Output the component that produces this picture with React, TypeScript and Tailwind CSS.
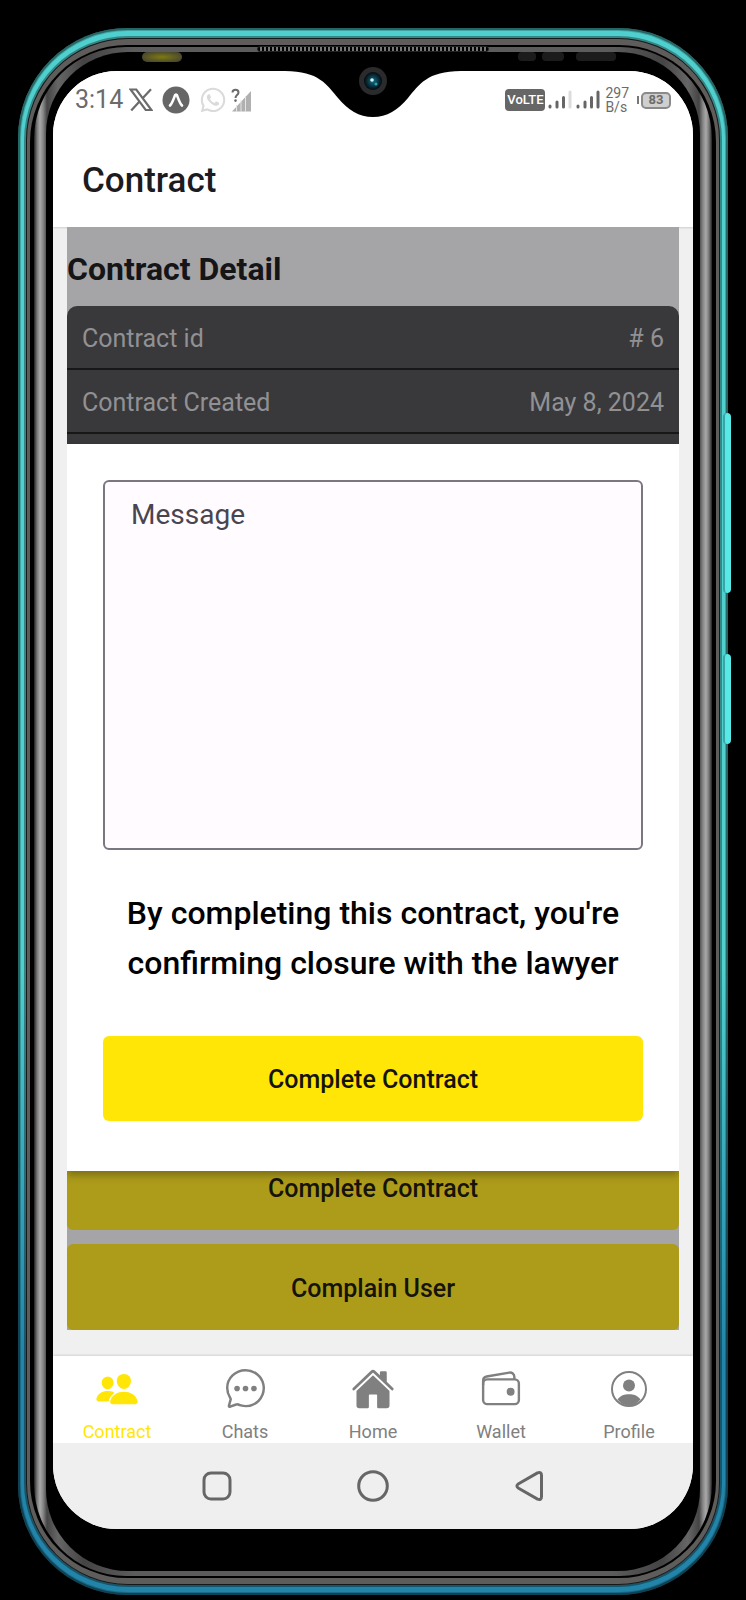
import React from "react";
import {
  IoChatbubbleEllipsesOutline,
  IoHome,
  IoPeople,
  IoWalletOutline,
} from "react-icons/io5";
import { FaWhatsapp } from "react-icons/fa";

function XLogo() {
  return (
    <svg viewBox="0 0 24 24" className="h-6 w-6" aria-hidden="true">
      <path
        d="M1.5 1.5h5.8L22.5 22h-5.8zM22 1.2l-8.6 9.3M9.8 14.2L2.2 22.6"
        fill="none"
        stroke="#6b6b6b"
        strokeWidth="2.2"
      />
    </svg>
  );
}

function ExpoLogo() {
  return (
    <svg viewBox="0 0 28 28" className="h-7 w-7" aria-hidden="true">
      <circle cx="14" cy="14" r="13.5" fill="#666" />
      <path
        d="M8 19.5C10.500 17 11.800 12.500 13 9.300c.4-1 1.600-1 2 0 1.200 3.200 2.500 7.700 5 10.200"
        fill="none"
        stroke="#fff"
        strokeWidth="2.600"
        strokeLinecap="round"
      />
    </svg>
  );
}

function UnknownSignal() {
  return (
    <svg viewBox="0 0 20 24" className="h-6 w-5" aria-hidden="true">
      <path d="M1 23.500L20 3v20.500z" fill="#b0b0b0" />
      <path d="M5.500 24V17M10 24V12M14.500 24V8" stroke="#e4e4e4" strokeWidth="1" />
      <path
        d="M1.500 4.500C1.500.8 7.500.8 7.500 4.500c0 2.600-3 2.600-3 5.500"
        fill="none"
        stroke="#fff"
        strokeWidth="4.500"
      />
      <path
        d="M1.500 4.500C1.500.8 7.500.8 7.500 4.500c0 2.600-3 2.600-3 5.500"
        fill="none"
        stroke="#6b6b6b"
        strokeWidth="2"
      />
      <circle cx="4.500" cy="12.600" r="1.300" fill="#6b6b6b" />
    </svg>
  );
}

function SignalBars({ full }: { full: boolean }) {
  return (
    <svg viewBox="0 0 24 20" className="h-5 w-6" aria-hidden="true">
      <g strokeWidth="3" strokeLinecap="round">
        <path d="M2 16v1M9 12v5M15.500 7.500V17" stroke="#666" />
        <path d="M22 2v15" stroke={full ? "#666" : "#dcdcdc"} />
      </g>
    </svg>
  );
}

function ProfileIcon() {
  return (
    <svg viewBox="0 0 40 40" className="h-10 w-10" aria-hidden="true">
      <circle cx="20" cy="20" r="17" fill="none" stroke="currentColor" strokeWidth="2" />
      <circle cx="20" cy="16.500" r="6" fill="currentColor" />
      <path d="M8.500 30.500c3-4 7-5.200 11.500-5.200s8.500 1.200 11.500 5.200A17 17 0 0 1 20 37 17 17 0 0 1 8.500 30.500z" fill="currentColor" />
    </svg>
  );
}

function StatusBar() {
  return (
    <div className="flex h-[58px] items-center justify-between pl-[22px] pr-[22px] text-[#6b6b6b]">
      <div className="flex items-center">
        <span className="text-[25px]">3:14</span>
        <span className="ml-1.5 flex items-center gap-[9px]">
          <XLogo />
          <ExpoLogo />
          <FaWhatsapp className="h-7 w-7 text-[#dadada]" />
        </span>
        <span className="ml-1 flex">
          <UnknownSignal />
        </span>
      </div>
      <div className="flex items-center">
        <span className="flex h-[22px] w-10 items-center justify-center rounded bg-[#666] text-[13px] font-medium text-white">
          VoLTE
        </span>
        <span className="ml-[3px] flex gap-1">
          <SignalBars full={false} />
          <SignalBars full />
        </span>
        <span className="ml-[5px] text-sm leading-[14px]">
          297
          <br />
          B/s
        </span>
        <span className="ml-2 flex items-center gap-0.5">
          <span className="h-2 w-0.5 bg-[#777]" />
          <span className="flex h-[17px] w-[30px] items-center justify-center rounded-[5px] border-2 border-[#8a8a8a] bg-[#cfcfcf] text-[13px] font-bold">
            83
          </span>
        </span>
      </div>
    </div>
  );
}

const rows = [
  { label: "Contract id", value: "# 6" },
  { label: "Contract Created", value: "May 8, 2024" },
];

function ContractPage() {
  return (
    <div className="col-start-1 row-start-1 flex flex-col bg-[#a5a5a7]">
      <h2 className="flex h-[79px] items-center pt-1 text-[32px] font-bold leading-none text-[#151517]">
        Contract Detail
      </h2>
      <dl className="flex-1 rounded-t-[10px] bg-[#39393b] text-[25px] text-[#919194]">
        {rows.map((row) => (
          <div
            key={row.label}
            className="flex h-16 items-center justify-between border-b-2 border-[#171718] px-[15px] pt-1"
          >
            <dt>{row.label}</dt>
            <dd>{row.value}</dd>
          </div>
        ))}
      </dl>
      <div className="flex flex-col gap-[14px] text-[25px] font-medium text-[#15130a]">
        <button className="h-[86px] rounded-md bg-[#ad9c1a] pt-1">Complete Contract</button>
        <button className="h-[86px] rounded-md bg-[#ad9c1a] pt-1">Complain User</button>
      </div>
    </div>
  );
}

function CompleteDialog() {
  return (
    <div
      role="dialog"
      aria-label="Complete Contract"
      className="z-10 col-start-1 row-start-1 mb-[159px] mt-[217px] flex flex-col bg-white px-9 pb-[50px] pt-9 shadow-[0_4px_8px_rgba(0,0,0,0.3)]"
    >
      <textarea
        aria-label="Message"
        placeholder="Message"
        className="h-[370px] resize-none rounded-md border-2 border-[#7b7780] bg-[#fffbff] px-[26px] py-[15px] text-[28px] leading-9 text-[#49454f] outline-none placeholder:text-[#49454f] placeholder:opacity-100"
      />
      <p className="mb-12 mt-[38px] text-center text-[32px] font-medium leading-[50px] text-black">
        By completing this contract, you're confirming closure with the lawyer
      </p>
      <button className="h-[85px] rounded-md bg-[#ffe606] pt-0.5 text-[25px] font-medium text-[#15130a]">
        Complete Contract
      </button>
    </div>
  );
}

const tabs = [
  { label: "Contract", icon: <IoPeople className="h-11 w-11" />, active: true },
  {
    label: "Chats",
    icon: <IoChatbubbleEllipsesOutline className="h-[45px] w-[45px] [&_path]:[stroke-width:28px]" />,
    active: false,
  },
  { label: "Home", icon: <IoHome className="h-11 w-11" />, active: false },
  {
    label: "Wallet",
    icon: <IoWalletOutline className="h-11 w-11 [&_path]:[stroke-width:28px] [&_rect]:[stroke-width:28px]" />,
    active: false,
  },
  { label: "Profile", icon: <ProfileIcon />, active: false },
];

function TabBar() {
  return (
    <nav className="grid h-[87px] grid-cols-5 bg-white shadow-[0_-1px_2px_rgba(0,0,0,0.12)]">
      {tabs.map((tab) => (
        <a
          key={tab.label}
          href="#"
          className={
            tab.active
              ? "flex flex-col items-center text-[#ffe606]"
              : "flex flex-col items-center text-[#808080]"
          }
        >
          <span className="flex h-[65px] items-center">{tab.icon}</span>
          <span className="text-lg leading-[22px]">{tab.label}</span>
        </a>
      ))}
    </nav>
  );
}

function SystemNav() {
  return (
    <div className="flex h-[86px] items-center justify-center gap-[124px] bg-[#efefef]">
      <button aria-label="Recent apps">
        <svg viewBox="0 0 32 32" className="h-8 w-8" fill="none" stroke="#666" strokeWidth="3">
          <rect x="3" y="3" width="26" height="26" rx="7" />
        </svg>
      </button>
      <button aria-label="Home screen">
        <svg viewBox="0 0 32 32" className="h-8 w-8" fill="none" stroke="#666" strokeWidth="3">
          <circle cx="16" cy="16" r="14.300" />
        </svg>
      </button>
      <button aria-label="Back">
        <svg viewBox="0 0 32 32" className="h-8 w-8" fill="none" stroke="#666" strokeWidth="3">
          <path d="M24.500 2.900L5.600 13.700q-3.400 2.300 0 4.600L24.500 29.100q4 1.400 4-2.600v-21q0-4-4-2.600z" />
        </svg>
      </button>
    </div>
  );
}

function Camera() {
  return (
    <svg viewBox="0 0 176 60" className="h-[60px] w-44" aria-hidden="true">
      <defs>
        <radialGradient id="lens">
          <stop offset="0" stopColor="#0f7186" />
          <stop offset="0.5" stopColor="#0a3c4c" />
          <stop offset="1" stopColor="#04090c" />
        </radialGradient>
      </defs>
      <path
        d="M0 0v14C34 14 42 28 53 41c10 12 21 19 35 19s25-7 35-19C134 28 142 14 176 14V0z"
        fill="#000"
      />
      <circle cx="88" cy="24" r="14" fill="#2b2b2d" />
      <circle cx="88" cy="24" r="9" fill="url(#lens)" />
      <circle cx="87" cy="23" r="1.800" fill="#d8f4f5" />
      <circle cx="91" cy="27" r="1.500" fill="#2fa3b6" />
    </svg>
  );
}

export default function App() {
  return (
    <div className="flex min-h-screen flex-col bg-black px-[18px] pb-[5px] pt-7 font-[Roboto,sans-serif]">
      <div className="relative flex flex-1 flex-col rounded-[110px] bg-linear-to-b from-[#4fcfce] from-60% to-[#2284a8] to-85% px-2 py-[10px] shadow-[inset_0_0_0_2px_rgba(0,0,0,0.38),inset_0_0_0_3px_rgba(0,0,0,0.2)]">
        <span className="absolute -right-[3px] top-[385px] h-[180px] w-2 rounded-sm border-l-2 border-[#3aa5a5] bg-[#58e8e6]" />
        <span className="absolute -right-[3px] top-[626px] h-[90px] w-2 rounded-sm border-l-2 border-[#3aa5a5] bg-[#58e8e6]" />
        <div className="flex flex-1 flex-col rounded-[102px] bg-[#5f5d5b] px-1 py-[7px] shadow-[0_0_0_2px_rgba(0,0,0,0.35),inset_0_0_0_1px_#161a1a]">
          <div className="flex flex-1 flex-col rounded-[97px] bg-black px-1 py-0.5">
            <div className="flex flex-1 flex-col rounded-[92px] bg-[linear-gradient(to_right,#222_0,#777_3px,#a9a9a9_6px,#888_9px,#444_13px,#666_24px,#444_50px,#5c5c5c_100px,#5c5c5c_calc(100%-100px),#444_calc(100%-50px),#666_calc(100%-24px),#444_calc(100%-13px),#888_calc(100%-9px),#a9a9a9_calc(100%-6px),#777_calc(100%-3px),#222_100%)] px-3 py-[5px]">
              <div className="relative flex flex-1 flex-col rounded-[82px] bg-black px-[7px] pb-[42px] pt-[19px]">
                <span className="absolute left-1/2 top-0 h-1.5 w-[232px] -translate-x-1/2 -translate-y-1.5 rounded-full border border-[#222] bg-[repeating-linear-gradient(to_right,#000_0,#000_2px,#777_2px,#777_4px)]" />
                <span className="absolute left-24 top-0 h-[10px] w-10 rounded-full bg-[radial-gradient(ellipse,#7d7a12,#3c3a35)]" />
                <span className="absolute right-[84px] top-0 flex gap-1.5">
                  <span className="h-[9px] w-[18px] rounded bg-[#1c1c1c]" />
                  <span className="h-[9px] w-[22px] rounded bg-[#1c1c1c]" />
                  <span className="ml-1.5 h-[9px] w-10 rounded bg-[#1c1c1c]" />
                </span>
                <span className="absolute left-1/2 top-[5px] z-10 -translate-x-1/2">
                  <Camera />
                </span>
                <main className="flex flex-1 flex-col overflow-hidden rounded-[64px] bg-[#f0f0f0]">
                  <header className="bg-white shadow-[0_1px_2px_rgba(0,0,0,0.15)]">
                    <StatusBar />
                    <h1 className="flex h-[98px] items-center pl-[29px] pt-1 text-[35px] font-medium leading-none text-[#1c1b1f]">
                      Contract
                    </h1>
                  </header>
                  <section className="mx-[14px] mb-[26px] grid flex-1 overflow-hidden">
                    <ContractPage />
                    <CompleteDialog />
                  </section>
                  <TabBar />
                  <SystemNav />
                </main>
              </div>
            </div>
          </div>
        </div>
      </div>
    </div>
  );
}
